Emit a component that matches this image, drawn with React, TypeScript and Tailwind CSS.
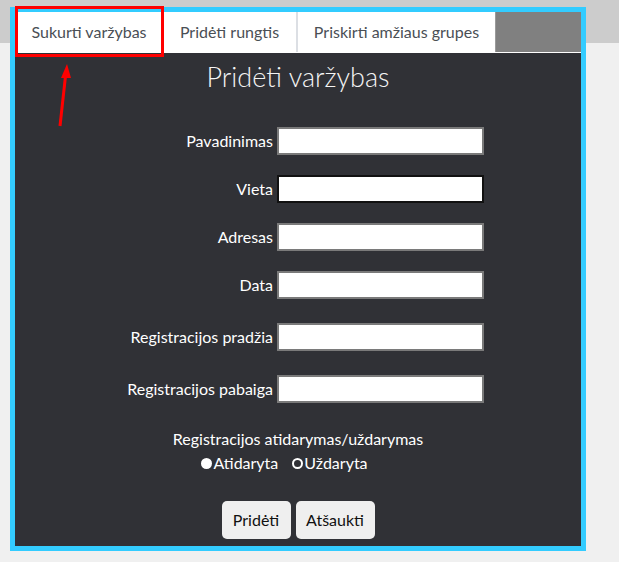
import React from "react";

const font = { fontFamily: "Lato, 'Noto Sans', sans-serif" };

function Row({ label, mt, dark }: { label: string; mt: string; dark?: boolean }) {
  return (
    <div className={`flex items-center ${mt}`}>
      <label className="w-[258px] text-right text-white text-[16px] leading-[24px]">{label}</label>
      <input
        type="text"
        className={`ml-[4px] w-[207px] h-[28px] bg-white border-2 ${dark ? "border-[#111111]" : "border-[#7a7a7a]"} outline-none`}
      />
    </div>
  );
}

export default function App() {
  return (
    <div
      className="relative w-[619px] h-[562px] overflow-hidden bg-[linear-gradient(to_bottom,#cccccc_43px,#f0f0f0_43px)] pt-[7px] pl-[10px]"
      style={font}
    >
      <div className="w-[576px] h-[544px] border-[5px] border-[#33ccff] bg-[#303136] flex flex-col">
        <div className="h-[41px] flex bg-[#808080] border-b border-white shrink-0">
          <div className="w-[148px] bg-white flex items-center justify-center text-[16px] text-[#4a4f55]">
            Sukurti varžybas
          </div>
          <div className="w-[133px] bg-white flex items-center justify-center text-[16px] text-[#4a4f55]">
            Pridėti rungtis
          </div>
          <div className="w-[2px] bg-[#dcdfe4]" />
          <div className="w-[198px] bg-white flex items-center justify-center text-[16px] text-[#4a4f55] border-r border-[#9a9a9a]">
            Priskirti amžiaus grupes
          </div>
        </div>

        <h2 className="mt-[6px] h-[36px] leading-[36px] text-center text-[27px] font-light text-[#f4f4f4]">
          Pridėti varžybas
        </h2>

        <Row label="Pavadinimas" mt="mt-[32px]" />
        <Row label="Vieta" mt="mt-[20px]" dark />
        <Row label="Adresas" mt="mt-[20px]" />
        <Row label="Data" mt="mt-[20px]" />
        <Row label="Registracijos pradžia" mt="mt-[24px]" />
        <Row label="Registracijos pabaiga" mt="mt-[24px]" />

        <div className="mt-[24px] text-center text-white text-[16px] leading-[24px]">
          Registracijos atidarymas/uždarymas
        </div>
        <div className="flex justify-center items-center text-white text-[16px] leading-[24px] pr-[27px]">
          <span className="w-[11px] h-[11px] rounded-full bg-white mr-[1px]" />
          <span>Atidaryta</span>
          <span className="ml-[14px] w-[11px] h-[11px] rounded-full border-2 border-white bg-[#303136] mr-[1px]" />
          <span>Uždaryta</span>
        </div>

        <div className="mt-[26px] flex justify-center gap-[5px]">
          <button className="w-[69px] h-[38px] rounded-[5px] bg-[#efefef] text-[16px] text-[#111]">Pridėti</button>
          <button className="w-[79px] h-[38px] rounded-[5px] bg-[#efefef] text-[16px] text-[#111]">Atšaukti</button>
        </div>
      </div>

      <div className="absolute left-[15px] top-[6px] w-[149px] h-[51px] border-[3px] border-[#ff0000] pointer-events-none" />
      <svg className="absolute left-0 top-0 pointer-events-none" width="120" height="140" viewBox="0 0 120 140">
        <line x1="60" y1="126" x2="65.5" y2="76" stroke="#ff0000" strokeWidth="3" />
        <polygon points="67,64 61,78 71,78" fill="#ff0000" />
      </svg>
    </div>
  );
}
